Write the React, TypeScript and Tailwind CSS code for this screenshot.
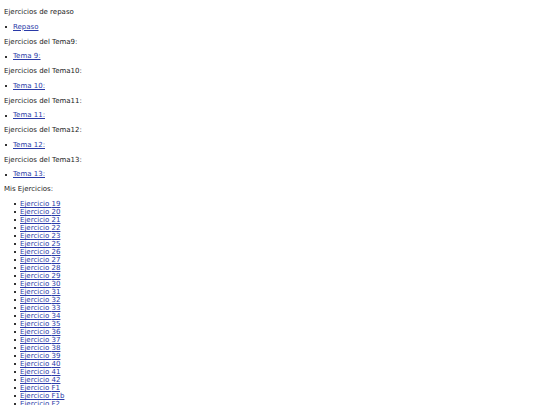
import React from 'react';

const temas = [
  { title: 'Ejercicios de repaso', link: 'Repaso' },
  { title: 'Ejercicios del Tema9:', link: 'Tema 9:' },
  { title: 'Ejercicios del Tema10:', link: 'Tema 10:' },
  { title: 'Ejercicios del Tema11:', link: 'Tema 11:' },
  { title: 'Ejercicios del Tema12:', link: 'Tema 12:' },
  { title: 'Ejercicios del Tema13:', link: 'Tema 13:' },
];

const ejercicios = [
  '19', '20', '21', '22', '23', '25', '26', '27', '28', '29', '30', '31', '32',
  '33', '34', '35', '36', '37', '38', '39', '40', '41', '42', 'F1', 'F1b', 'F2',
];

const Bullet: React.FC = () => (
  <span className="inline-block w-[2px] h-[2px] bg-[#333] shrink-0" />
);

export default function App() {
  return (
    <div className="h-[405px] overflow-hidden bg-white px-[4px] pt-[5px] text-[7px] text-[#222] font-['DejaVu_Sans',Verdana,sans-serif]">
      {temas.map((t) => (
        <div key={t.link}>
          <div className="leading-[14.75px]">{t.title}</div>
          <div className="flex items-center gap-[6px] pl-[1px] leading-[14.75px]">
            <Bullet />
            <a href="#" className="text-[#2a3aa8] underline">
              {t.link}
            </a>
          </div>
        </div>
      ))}
      <div className="leading-[14.75px]">Mis Ejercicios:</div>
      <ul className="mt-[3.5px] pl-[10px]">
        {ejercicios.map((e) => (
          <li key={e} className="flex items-center gap-[4px] leading-[8px]">
            <Bullet />
            <a href="#" className="text-[#2a3aa8] underline">
              Ejercicio {e}
            </a>
          </li>
        ))}
      </ul>
    </div>
  );
}
